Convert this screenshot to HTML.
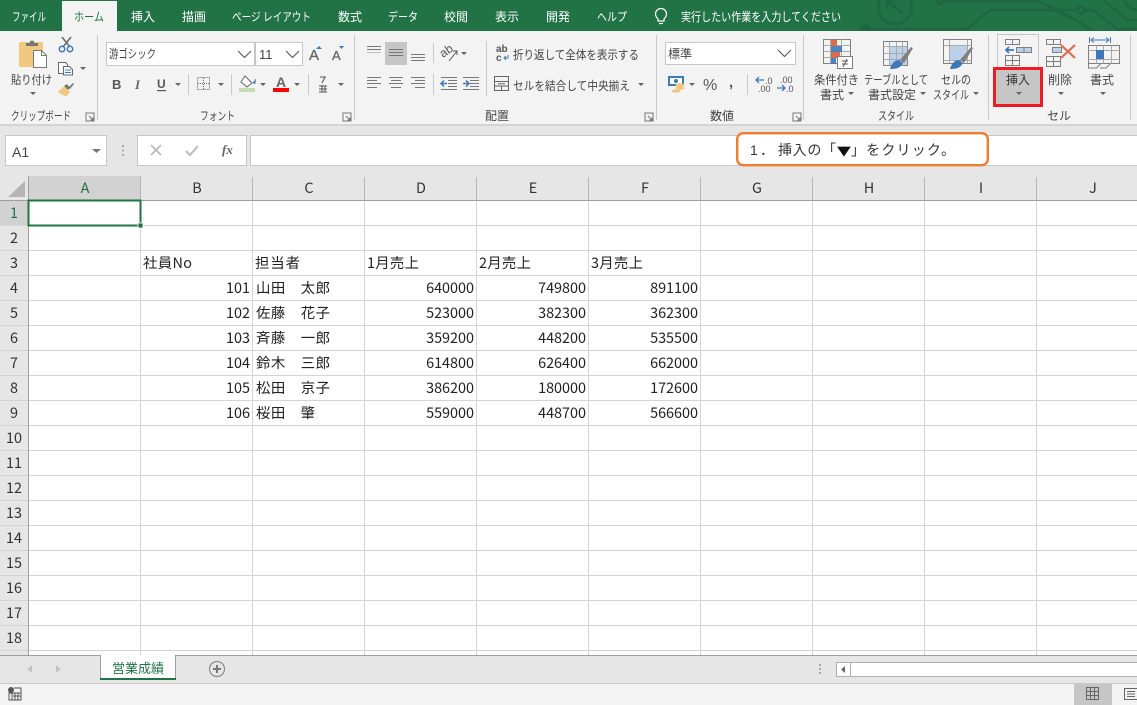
<!DOCTYPE html>
<html lang="ja"><head><meta charset="utf-8"><title>営業成績 - Excel</title>
<style>
html,body{margin:0;padding:0;background:#fff;overflow:hidden}
svg{display:block;font-family:"Liberation Sans","Noto Sans CJK JP",sans-serif}
text{fill:#444;font-size:12px}
.tab text{fill:#fff;font-size:12px}
.c text{fill:#222;font-size:14.4px;font-family:"Noto Sans CJK JP",sans-serif}
.h text{fill:#333;font-size:14.4px;text-anchor:middle;font-family:"Noto Sans CJK JP",sans-serif}
.n text{text-anchor:end}
.g{stroke:#7f7f7f;fill:none}
.cr line,.cr rect{shape-rendering:crispEdges}
</style></head><body>
<svg width="1137" height="705" viewBox="0 0 1137 705" xmlns="http://www.w3.org/2000/svg">
<defs>
<path id="k" d="M0 0h6l-3 3z" fill="#666"/>
<path id="v" d="M0 0l6.500 6.500l6.500-6.500" fill="none" stroke="#555" stroke-width="1.100"/>
<path id="l" d="M0 0h8v8h-8zM3 3l4 4M7 4.500v2.500h-2.500" fill="none" stroke="#777" stroke-width="1"/>
</defs>

<!-- title bar -->
<rect width="1137" height="31" fill="#217346"/>
<g fill="none" stroke="#1e6640" stroke-width="2.500">
<circle cx="895" cy="7" r="17" stroke-width="3"/><path d="M887 0l16 14M887 0v7M887 0h8" stroke-width="3"/>
<path d="M940 1.500h100l38 20 15 10"/><circle cx="940" cy="1" r="3"/>
<path d="M860 29h107l23-19h87"/><circle cx="1081" cy="10" r="3.500"/><path d="M1085 10h8l27 21"/>
<circle cx="865" cy="29" r="3.500"/>
<path d="M1103 0l24 20h10M1124 0c2 6 7 9 13 10M1120 29h17"/>
</g>
<rect x="62" y="1" width="55" height="30" fill="#f3f3f3"/>
<g class="tab">
<text x="12" y="21" textLength="34" lengthAdjust="spacingAndGlyphs">ファイル</text>
<text x="74" y="21" textLength="30" lengthAdjust="spacingAndGlyphs" style="fill:#217346">ホーム</text>
<text x="131" y="21" textLength="24" lengthAdjust="spacingAndGlyphs">挿入</text>
<text x="182" y="21" textLength="24" lengthAdjust="spacingAndGlyphs">描画</text>
<text x="232" y="21" textLength="79" lengthAdjust="spacingAndGlyphs">ページ レイアウト</text>
<text x="338" y="21" textLength="24" lengthAdjust="spacingAndGlyphs">数式</text>
<text x="388" y="21" textLength="30" lengthAdjust="spacingAndGlyphs">データ</text>
<text x="444" y="21" textLength="24" lengthAdjust="spacingAndGlyphs">校閲</text>
<text x="495" y="21" textLength="24" lengthAdjust="spacingAndGlyphs">表示</text>
<text x="546" y="21" textLength="24" lengthAdjust="spacingAndGlyphs">開発</text>
<text x="597" y="21" textLength="30" lengthAdjust="spacingAndGlyphs">ヘルプ</text>
<text x="681" y="21" textLength="160" lengthAdjust="spacingAndGlyphs">実行したい作業を入力してください</text>
</g>
<g fill="none" stroke="#fff" stroke-width="1.200"><path d="M658 19c-1.500-1.500-2.500-3-2.500-5a5.500 5.500 0 0 1 11 0c0 2-1 3.500-2.500 5v2h-6zM659 23.500h4"/></g>

<!-- ribbon -->
<rect y="31" width="1137" height="93" fill="#f3f3f3"/>
<g class="cr" stroke="#c9c9c9">
<line x1="97.500" y1="35" x2="97.500" y2="120"/><line x1="354.500" y1="35" x2="354.500" y2="120"/><line x1="656.500" y1="35" x2="656.500" y2="120"/><line x1="803.500" y1="35" x2="803.500" y2="120"/><line x1="988.500" y1="35" x2="988.500" y2="120"/><line x1="1130.500" y1="35" x2="1130.500" y2="120"/>
<line x1="188.500" y1="74" x2="188.500" y2="95"/><line x1="231.500" y1="74" x2="231.500" y2="95"/><line x1="308.500" y1="74" x2="308.500" y2="95"/>
<line x1="433.500" y1="43" x2="433.500" y2="63"/><line x1="433.500" y1="74" x2="433.500" y2="95"/><line x1="486.500" y1="41" x2="486.500" y2="96"/><line x1="747.500" y1="74" x2="747.500" y2="95"/>
</g>
<rect y="124" width="1137" height="2" fill="#d4d4d4"/>

<!-- clipboard -->
<rect x="19" y="42" width="24" height="25" rx="2" fill="#f0c87f"/>
<path d="M26 46v-3h3.500a2.500 2.500 0 0 1 5 0h3.500v3z" fill="#777"/>
<path d="M33.500 50.500h8l5 5v12h-13z" fill="#fff" stroke="#777"/><path d="M41.500 50.500v5h5" fill="none" stroke="#777"/>
<g fill="none" stroke="#666" stroke-width="1.500"><path d="M62 37l8 10M71 37l-8 10"/></g>
<g fill="none" stroke="#3f78b8" stroke-width="1.500"><circle cx="62" cy="49" r="2.700"/><circle cx="70" cy="49" r="2.700"/></g>
<path d="M58.500 62.500h7l2 2v9h-9z" fill="#fff" stroke="#666"/><path d="M63.500 66.500h6l3 3v5.500h-9z" fill="#fff" stroke="#666"/><path d="M65 70h6M65 72.500h6" stroke="#3f78b8"/>
<use href="#k" x="80" y="67"/>
<path d="M58 92l6-6 6 6-4 5c-2-2-6-3-8-5z" fill="#f0c87f"/><path d="M64 86l3-2 3 4-2 2zM69 87l4-4 1 1-4 5z" fill="#777"/>
<text x="11" y="84" textLength="41" lengthAdjust="spacingAndGlyphs">貼り付け</text><use href="#k" x="30" y="92"/>
<text x="11" y="120" textLength="60" lengthAdjust="spacingAndGlyphs">クリップボード</text><use href="#l" x="86" y="113"/>

<!-- font -->
<g class="cr"><rect x="106.500" y="42.500" width="148" height="23" fill="#fff" stroke="#c6c6c6"/><rect x="255.500" y="42.500" width="47" height="23" fill="#fff" stroke="#c6c6c6"/></g>
<text x="109" y="58" textLength="47" lengthAdjust="spacingAndGlyphs">游ゴシック</text><use href="#v" x="238" y="51"/>
<text x="259" y="59" style="font-size:13px">11</text><use href="#v" x="286" y="51"/>
<text x="309" y="60" style="font-size:15px;fill:#666;stroke:#666;stroke-width:.3">A</text><path d="M316 49l3-3 3 3z" fill="#3f78b8"/>
<text x="332" y="60" style="font-size:13px;fill:#666;stroke:#666;stroke-width:.3">A</text><path d="M339 46h5l-2.500 3z" fill="#3f78b8"/>
<text x="112" y="89" style="font-family:'Liberation Sans';font-weight:bold;font-size:13px;fill:#555">B</text>
<text x="135" y="89" style="font-family:'Liberation Serif';font-style:italic;font-weight:bold;font-size:13px;fill:#666">I</text>
<text x="157" y="88" style="font-family:'Liberation Sans';font-weight:bold;font-size:12px;fill:#555">U</text><rect x="157" y="90" width="9" height="1.200" fill="#555"/>
<use href="#k" x="175" y="83"/>
<rect x="197.500" y="77.500" width="12" height="12" fill="none" stroke="#666" stroke-dasharray="1 1"/><path d="M203.500 78v12M198 83.500h12" stroke="#666" stroke-dasharray="1 1"/>
<use href="#k" x="218" y="83"/>
<path d="M245 76l7 7-5 4-6-5z" fill="#fff" stroke="#666"/><path d="M252 83c2-1 3-3 3-5 1 2 1 4 0 6z" fill="#3f78b8"/>
<rect x="239" y="88" width="16" height="4" fill="#c5dcb0"/><use href="#k" x="260" y="83"/>
<text x="276" y="87" style="font-size:14px;font-weight:bold;fill:#666">A</text>
<rect x="273" y="88" width="16" height="4" fill="#f00"/><use href="#k" x="294" y="83"/>
<g stroke="#555" fill="none"><path d="M320 77h6M325 77l-3 6M322 85v7M319 86h8M319 89h8M319 92h8M325 86v6"/></g>
<use href="#k" x="338" y="83"/>
<text x="200" y="120" textLength="35" lengthAdjust="spacingAndGlyphs">フォント</text><use href="#l" x="343" y="113"/>

<!-- alignment -->
<rect x="385" y="42" width="22" height="23" fill="#c6c6c6"/>
<g class="cr" stroke="#777">
<line x1="367" y1="46.500" x2="381" y2="46.500"/><line x1="367" y1="49.500" x2="381" y2="49.500"/><line x1="367" y1="52.500" x2="381" y2="52.500" stroke="#bbb"/>
<line x1="389" y1="49.500" x2="403" y2="49.500"/><line x1="389" y1="52.500" x2="403" y2="52.500"/><line x1="389" y1="55.500" x2="403" y2="55.500"/>
<line x1="411" y1="54.500" x2="425" y2="54.500"/><line x1="411" y1="57.500" x2="425" y2="57.500"/><line x1="411" y1="60.500" x2="425" y2="60.500"/>
<line x1="367" y1="77.500" x2="381" y2="77.500"/><line x1="367" y1="80.500" x2="377" y2="80.500"/><line x1="367" y1="83.500" x2="381" y2="83.500"/><line x1="367" y1="87.500" x2="377" y2="87.500"/>
<line x1="389" y1="77.500" x2="403" y2="77.500"/><line x1="391" y1="80.500" x2="401" y2="80.500"/><line x1="389" y1="83.500" x2="403" y2="83.500"/><line x1="391" y1="87.500" x2="401" y2="87.500"/>
<line x1="411" y1="77.500" x2="425" y2="77.500"/><line x1="415" y1="80.500" x2="425" y2="80.500"/><line x1="411" y1="83.500" x2="425" y2="83.500"/><line x1="415" y1="87.500" x2="425" y2="87.500"/>
<line x1="441" y1="77.500" x2="457" y2="77.500"/><line x1="448" y1="80.500" x2="457" y2="80.500"/><line x1="448" y1="83.500" x2="457" y2="83.500"/><line x1="448" y1="86.500" x2="457" y2="86.500"/><line x1="441" y1="89.500" x2="457" y2="89.500"/>
<line x1="463" y1="77.500" x2="479" y2="77.500"/><line x1="470" y1="80.500" x2="479" y2="80.500"/><line x1="470" y1="83.500" x2="479" y2="83.500"/><line x1="470" y1="86.500" x2="479" y2="86.500"/><line x1="463" y1="89.500" x2="479" y2="89.500"/>
</g>
<path d="M447 83.500h-6m3-3l-3 3 3 3" fill="none" stroke="#3f78b8" stroke-width="1.500"/><path d="M463 83.500h6m-3-3l3 3-3 3" fill="none" stroke="#3f78b8" stroke-width="1.500"/>
<text transform="translate(443 58) rotate(-35)" style="font-size:12px;fill:#555">ab</text><path d="M449 61l8-10m-4 0h4v4" fill="none" stroke="#555"/><use href="#k" x="461" y="52"/>
<text x="496" y="52" style="font-size:10px;font-weight:bold;fill:#555">ab</text><text x="496" y="61" style="font-size:10px;font-weight:bold;fill:#555">c</text><path d="M508 55v3h-4m2-2l-2 2 2 2" fill="none" stroke="#3f78b8"/>
<text x="513" y="59" textLength="126" lengthAdjust="spacingAndGlyphs">折り返して全体を表示する</text>
<rect x="494.500" y="76.500" width="14" height="14" fill="none" stroke="#666"/><path d="M495 81.500h13M495 86h13M501.500 86v4M498 83.800h7" stroke="#666" fill="none"/>
<text x="513" y="90" textLength="117" lengthAdjust="spacingAndGlyphs">セルを結合して中央揃え</text><use href="#k" x="638" y="83"/>
<text x="485" y="120" textLength="24" lengthAdjust="spacingAndGlyphs">配置</text><use href="#l" x="645" y="113"/>

<!-- number -->
<g class="cr"><rect x="665.500" y="42.500" width="130" height="22" fill="#fff" stroke="#c6c6c6"/></g>
<text x="668" y="58" textLength="24" lengthAdjust="spacingAndGlyphs">標準</text><use href="#v" x="778" y="50"/>
<rect x="669" y="77" width="14" height="8" fill="#fff" stroke="#3f78b8" stroke-width="2"/><circle cx="676" cy="81" r="2" fill="#3f78b8"/>
<ellipse cx="680" cy="85" rx="4.500" ry="1.800" fill="#f0c87f"/><ellipse cx="680" cy="88" rx="4.500" ry="1.800" fill="#f0c87f"/><ellipse cx="676" cy="91" rx="4.500" ry="1.800" fill="#f0c87f"/>
<use href="#k" x="689" y="83"/>
<text x="703" y="90" style="font-size:16px;fill:#555;font-family:'Liberation Sans'">%</text>
<text x="729" y="87" style="font-size:15px;font-weight:bold;fill:#555;font-family:'Liberation Sans'">,</text>
<path d="M764 80h-8m3-3l-3 3 3 3" fill="none" stroke="#3f78b8" stroke-width="1.300"/>
<text x="765" y="84" style="font-size:9px;fill:#555;font-family:'Liberation Sans'">.0</text><text x="758" y="92" style="font-size:9px;fill:#555;font-family:'Liberation Sans'">.00</text>
<text x="780" y="83" style="font-size:9px;fill:#555;font-family:'Liberation Sans'">.00</text><text x="786" y="92" style="font-size:9px;fill:#555;font-family:'Liberation Sans'">.0</text>
<path d="M777 88h8m-3-3l3 3-3 3" fill="none" stroke="#3f78b8" stroke-width="1.300"/>
<text x="710" y="120" textLength="24" lengthAdjust="spacingAndGlyphs">数値</text><use href="#l" x="793" y="113"/>

<!-- styles -->
<g class="g"><rect x="823.500" y="39.500" width="27" height="24"/><path d="M830.500 39.500v24M841.500 39.500v24M823.500 45.500h27M823.500 51.500h27M823.500 57.500h27" stroke="#aaa"/></g>
<rect x="831" y="40" width="6" height="6" fill="#dd6b4d"/><rect x="831" y="46" width="11" height="6" fill="#3f78b8" opacity=".9"/><rect x="831" y="52" width="9" height="6" fill="#dd6b4d"/><rect x="831" y="58" width="5" height="6" fill="#3f78b8" opacity=".9"/>
<rect x="837.500" y="56.500" width="15" height="12" fill="#fff" stroke="#7f7f7f"/><path d="M842 61h6M842 64h6M847 59l-4 8" stroke="#555" fill="none"/>
<rect x="889" y="46" width="19" height="19" fill="#bdd0e9"/><g class="g"><rect x="883.500" y="41.500" width="24" height="24"/><path d="M883.500 46.500h24M883.500 53.500h24M883.500 59.500h24M889.500 41.500v24M896.500 41.500v24M902.500 41.500v24" stroke="#aaa"/></g>
<path d="M900 60l11-13 2 1-9 15z" fill="#7f7f7f"/><path d="M890 69c1-4 4-9 9-9l4 3c-2 3-3 6-13 6z" fill="#3f78b8"/>
<rect x="949" y="45" width="18" height="15" fill="#bdd0e9"/><g class="g"><rect x="943.500" y="39.500" width="28" height="24"/><path d="M943.500 45.500h28M943.500 60.500h28M949.500 39.500v24M967.500 39.500v24" stroke="#aaa"/></g>
<path d="M960 60l11-13 2 1-9 15z" fill="#7f7f7f"/><path d="M950 69c1-4 4-9 9-9l4 3c-2 3-3 6-13 6z" fill="#3f78b8"/>
<text x="814" y="84" textLength="45" lengthAdjust="spacingAndGlyphs">条件付き</text><text x="820" y="99" textLength="24" lengthAdjust="spacingAndGlyphs">書式</text><use href="#k" x="848" y="92"/>
<text x="864" y="84" textLength="64" lengthAdjust="spacingAndGlyphs">テーブルとして</text><text x="868" y="99" textLength="48" lengthAdjust="spacingAndGlyphs">書式設定</text><use href="#k" x="920" y="92"/>
<text x="941" y="84" textLength="30" lengthAdjust="spacingAndGlyphs">セルの</text><text x="933" y="99" textLength="36" lengthAdjust="spacingAndGlyphs">スタイル</text><use href="#k" x="973" y="92"/>
<text x="878" y="120" textLength="36" lengthAdjust="spacingAndGlyphs">スタイル</text>

<!-- cells -->
<rect x="997.500" y="34.500" width="41" height="70" fill="none" stroke="#c6c6c6"/>
<rect x="996" y="69" width="44" height="36" fill="#c6c6c6"/>
<rect x="994.500" y="68.500" width="47" height="37" fill="none" stroke="#ed1c24" stroke-width="3"/>
<g class="g"><rect x="1005.500" y="39.500" width="14" height="5"/><path d="M1012.500 39.500v5"/><rect x="1016.500" y="47.500" width="15" height="5" fill="#bdd0e9"/><path d="M1024 47.500v5"/><rect x="1005.500" y="55.500" width="14" height="10"/><path d="M1012.500 55.500v10M1005.500 60.500h14"/></g>
<path d="M1014 50h-8m3-3l-3 3 3 3" fill="none" stroke="#3f78b8" stroke-width="1.800"/>
<g class="g"><rect x="1046.500" y="39.500" width="14" height="5"/><path d="M1053.500 39.500v5"/><rect x="1052.500" y="47.500" width="9" height="5" fill="#bdd0e9"/><rect x="1046.500" y="56.500" width="14" height="10"/><path d="M1053.500 56.500v10M1046.500 61.500h14"/></g>
<path d="M1061 45l14 13M1075 45l-14 13" stroke="#dd6b4d" stroke-width="2.200" fill="none"/>
<path d="M1089.500 37v6M1110.500 37v6" stroke="#3f78b8"/><path d="M1091 40h18m-3-2.500l3 2.500-3 2.500M1094 37.500l-3 2.500 3 2.500" fill="none" stroke="#3f78b8"/>
<g class="g"><rect x="1088.500" y="45.500" width="31" height="18"/><path d="M1096.500 45.500v18M1103.500 45.500v18M1111.500 45.500v18M1088.500 50.500h31M1088.500 59.500h31" stroke="#aaa"/></g>
<rect x="1096" y="50" width="8" height="9" fill="#3f78b8"/>
<path d="M1088.500 64v4h8l4-4M1100 68h6l4-4" fill="none" stroke="#7f7f7f"/>
<text x="1006" y="84" textLength="24" lengthAdjust="spacingAndGlyphs" style="fill:#333">挿入</text><use href="#k" x="1016" y="92"/>
<text x="1048" y="84" textLength="24" lengthAdjust="spacingAndGlyphs">削除</text><use href="#k" x="1058" y="92"/>
<text x="1090" y="84" textLength="24" lengthAdjust="spacingAndGlyphs">書式</text><use href="#k" x="1100" y="92"/>
<text x="1047" y="120" textLength="24" lengthAdjust="spacingAndGlyphs">セル</text>

<!-- formula bar -->
<rect y="126" width="1137" height="50" fill="#e6e6e6"/>
<g class="cr" stroke="#c6c6c6" fill="#fff"><rect x="5.500" y="135.500" width="101" height="30"/><rect x="137.500" y="135.500" width="109" height="30"/><rect x="250.500" y="135.500" width="900" height="30"/></g>
<text x="12" y="157" style="font-size:14px">A1</text><path d="M92 149h9l-4.500 4z" fill="#777"/>
<path d="M122 145h2v2h-2zM122 149.500h2v2h-2zM122 154h2v2h-2z" fill="#aaa"/>
<path d="M151 145l10 10M161 145l-10 10" stroke="#bbb" stroke-width="1.800" fill="none"/>
<path d="M186 151l4 4 8-9" stroke="#bbb" stroke-width="2" fill="none"/>
<text x="222" y="154" style="font-family:'Liberation Serif';font-style:italic;font-weight:bold;font-size:13px;fill:#666">fx</text>
<rect x="737.200" y="133.200" width="250.600" height="32" rx="6" fill="#fff" stroke="#ed7d31" stroke-width="2.400"/>
<text x="750" y="155" style="font-size:14px;fill:#333">1</text><text x="760" y="155" style="font-size:14px;fill:#333">．</text>
<text x="778" y="155" textLength="58" style="font-size:14px;fill:#333">挿入の「</text>
<text transform="translate(837 155) scale(1 .72)" style="font-size:18px;fill:#111;font-family:'DejaVu Sans'">▼</text>
<text x="851" y="155" textLength="104" style="font-size:14px;fill:#333">」をクリック。</text>

<!-- sheet -->
<rect y="176" width="1137" height="480" fill="#fff"/>
<rect y="176" width="1137" height="24" fill="#e6e6e6"/><rect y="200" width="28" height="456" fill="#e6e6e6"/>
<rect x="29" y="176" width="112" height="24" fill="#d2d2d2"/><rect y="201" width="28" height="24" fill="#d2d2d2"/>
<path d="M8 197l17-16v16z" fill="#b5b5b5"/>
<g class="cr" stroke="#d4d4d4">
<line x1="140.500" y1="201" x2="140.500" y2="655"/><line x1="252.500" y1="201" x2="252.500" y2="655"/><line x1="364.500" y1="201" x2="364.500" y2="655"/><line x1="476.500" y1="201" x2="476.500" y2="655"/><line x1="588.500" y1="201" x2="588.500" y2="655"/><line x1="700.500" y1="201" x2="700.500" y2="655"/><line x1="812.500" y1="201" x2="812.500" y2="655"/><line x1="924.500" y1="201" x2="924.500" y2="655"/><line x1="1036.500" y1="201" x2="1036.500" y2="655"/>
<line x1="0" y1="225.500" x2="1137" y2="225.500"/><line x1="0" y1="250.500" x2="1137" y2="250.500"/><line x1="0" y1="275.500" x2="1137" y2="275.500"/><line x1="0" y1="300.500" x2="1137" y2="300.500"/><line x1="0" y1="325.500" x2="1137" y2="325.500"/><line x1="0" y1="350.500" x2="1137" y2="350.500"/><line x1="0" y1="375.500" x2="1137" y2="375.500"/><line x1="0" y1="400.500" x2="1137" y2="400.500"/><line x1="0" y1="425.500" x2="1137" y2="425.500"/><line x1="0" y1="450.500" x2="1137" y2="450.500"/><line x1="0" y1="475.500" x2="1137" y2="475.500"/><line x1="0" y1="500.500" x2="1137" y2="500.500"/><line x1="0" y1="525.500" x2="1137" y2="525.500"/><line x1="0" y1="550.500" x2="1137" y2="550.500"/><line x1="0" y1="575.500" x2="1137" y2="575.500"/><line x1="0" y1="600.500" x2="1137" y2="600.500"/><line x1="0" y1="625.500" x2="1137" y2="625.500"/><line x1="0" y1="650.500" x2="1137" y2="650.500"/>
</g>
<g class="cr" stroke="#b4b4b4">
<line x1="140.500" y1="177" x2="140.500" y2="200"/><line x1="252.500" y1="177" x2="252.500" y2="200"/><line x1="364.500" y1="177" x2="364.500" y2="200"/><line x1="476.500" y1="177" x2="476.500" y2="200"/><line x1="588.500" y1="177" x2="588.500" y2="200"/><line x1="700.500" y1="177" x2="700.500" y2="200"/><line x1="812.500" y1="177" x2="812.500" y2="200"/><line x1="924.500" y1="177" x2="924.500" y2="200"/><line x1="1036.500" y1="177" x2="1036.500" y2="200"/>
</g>
<g class="cr"><rect x="0" y="200" width="1137" height="1" fill="#9f9f9f"/><rect x="28" y="176" width="1" height="480" fill="#9f9f9f"/></g>
<g class="h">
<text x="85" y="193" style="fill:#217346">A</text><text x="197" y="193">B</text><text x="309" y="193">C</text><text x="421" y="193">D</text><text x="533" y="193">E</text><text x="645" y="193">F</text><text x="757" y="193">G</text><text x="869" y="193">H</text><text x="981" y="193">I</text><text x="1093" y="193">J</text>
<text x="14" y="218" style="fill:#217346">1</text><text x="14" y="243">2</text><text x="14" y="268">3</text><text x="14" y="293">4</text><text x="14" y="318">5</text><text x="14" y="343">6</text><text x="14" y="368">7</text><text x="14" y="393">8</text><text x="14" y="418">9</text><text x="14" y="443">10</text><text x="14" y="468">11</text><text x="14" y="493">12</text><text x="14" y="518">13</text><text x="14" y="543">14</text><text x="14" y="568">15</text><text x="14" y="593">16</text><text x="14" y="618">17</text><text x="14" y="643">18</text>
</g>
<rect x="28.500" y="200.500" width="112" height="25" fill="none" stroke="#217346" stroke-width="2"/>
<rect x="138" y="223" width="5" height="5" fill="#217346" stroke="#fff" stroke-width=".8"/>
<g class="c">
<text x="143" y="268" textLength="49">社員No</text><text x="255" y="268" textLength="45">担当者</text><text x="367" y="268" textLength="52">1月売上</text><text x="479" y="268" textLength="52">2月売上</text><text x="591" y="268" textLength="52">3月売上</text>
<text x="256" y="293" textLength="74">山田　太郎</text><text x="256" y="318" textLength="74">佐藤　花子</text><text x="256" y="343" textLength="74">斉藤　一郎</text><text x="256" y="368" textLength="74">鈴木　三郎</text><text x="256" y="393" textLength="74">松田　京子</text><text x="256" y="418" textLength="59">桜田　肇</text>
</g>
<g class="c n">
<text x="250" y="293">101</text><text x="474" y="293">640000</text><text x="586" y="293">749800</text><text x="698" y="293">891100</text>
<text x="250" y="318">102</text><text x="474" y="318">523000</text><text x="586" y="318">382300</text><text x="698" y="318">362300</text>
<text x="250" y="343">103</text><text x="474" y="343">359200</text><text x="586" y="343">448200</text><text x="698" y="343">535500</text>
<text x="250" y="368">104</text><text x="474" y="368">614800</text><text x="586" y="368">626400</text><text x="698" y="368">662000</text>
<text x="250" y="393">105</text><text x="474" y="393">386200</text><text x="586" y="393">180000</text><text x="698" y="393">172600</text>
<text x="250" y="418">106</text><text x="474" y="418">559000</text><text x="586" y="418">448700</text><text x="698" y="418">566600</text>
</g>

<!-- sheet tabs -->
<rect y="655" width="1137" height="29" fill="#e6e6e6"/><rect y="655" width="1137" height="1" fill="#9f9f9f"/>
<path d="M32 665v8l-5-4zM56 665v8l5-4z" fill="#c4c4c4"/>
<rect x="100" y="655" width="76" height="24" fill="#fff"/><path d="M100.500 655v24M175.500 655v24" stroke="#9f9f9f" fill="none"/>
<rect x="100" y="678" width="76" height="2" fill="#217346"/>
<text x="112" y="673" textLength="52" style="font-size:13px;fill:#217346">営業成績</text>
<circle cx="217" cy="669" r="7.500" fill="none" stroke="#8a8a8a" stroke-width="1.200"/><path d="M217 665v8M213 669h8" stroke="#777" stroke-width="2"/>
<path d="M819 664h2v2h-2zM819 668h2v2h-2zM819 672h2v2h-2z" fill="#aaa"/>
<rect x="836.500" y="662.500" width="310" height="14" fill="#fff" stroke="#b0b0b0"/><rect x="850" y="663" width="1" height="14" fill="#b0b0b0"/><path d="M845 666v7l-4-3.500z" fill="#666"/>

<!-- status bar -->
<rect y="684" width="1137" height="21" fill="#f3f3f3"/><rect y="683" width="1137" height="1" fill="#c9c9c9"/>
<circle cx="11" cy="690" r="3" fill="#555"/><path d="M14 688h7v12h-12v-7h12M13 696h8M12 693v7M15 693v7M18 693v7" stroke="#555" fill="none"/>
<rect x="1074" y="684" width="38" height="21" fill="#c6c6c6"/>
<rect x="1086.500" y="687.500" width="12" height="12" fill="none" stroke="#666"/><path d="M1090.500 688v12M1094.500 688v12M1087 691.500h12M1087 695.500h12" stroke="#666" fill="none"/>
<rect x="1124.500" y="688.500" width="13" height="11" fill="none" stroke="#666"/><path d="M1127 691.500h8M1127 694h8M1127 696.500h8" stroke="#666" fill="none"/>
</svg>
</body></html>
